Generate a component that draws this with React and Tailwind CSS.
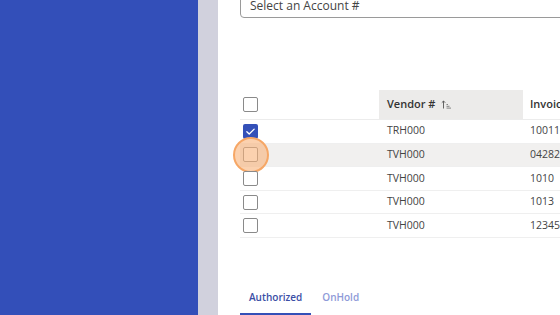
import React from 'react';

const rows = [
  { vendor: 'TRH000', invoice: '100110', checked: true },
  { vendor: 'TVH000', invoice: '042820', hover: true },
  { vendor: 'TVH000', invoice: '1010' },
  { vendor: 'TVH000', invoice: '1013' },
  { vendor: 'TVH000', invoice: '12345' },
];

function Box({ checked }) {
  if (checked) {
    return (
      <div className="w-[15px] h-[15px] rounded-[2px] bg-[#3450b8] flex items-center justify-center">
        <svg width="11" height="11" viewBox="0 0 12 12" fill="none">
          <path d="M2 6.2l2.6 2.6L10 3.4" stroke="#fff" strokeWidth="1.4" strokeLinecap="round" strokeLinejoin="round" />
        </svg>
      </div>
    );
  }
  return <div className="w-[15px] h-[15px] rounded-[2px] border border-[#8a8a8a] bg-white" />;
}

function SortIcon() {
  return (
    <svg width="11" height="9" viewBox="0 0 11 9" fill="none" className="ml-[6px]">
      <path d="M2.5 8.5V1M0.8 2.7L2.5 1l1.7 1.7" stroke="#555" strokeWidth="0.9" />
      <path d="M5.5 4.5h1.5M5.5 6.3h3M5.5 8.1h4.5" stroke="#777" strokeWidth="0.9" />
    </svg>
  );
}

export default function App() {
  return (
    <div className="w-[560px] h-[315px] overflow-hidden flex bg-white font-['Open_Sans',sans-serif]">
      <div className="w-[198px] shrink-0 bg-[#334fb9]" />
      <div className="w-[20px] shrink-0 bg-[#d1d1dd]" />
      <div className="flex-1 pl-[22px] flex flex-col min-w-0">
        {/* Account select */}
        <div className="-mt-[20px] h-[38px] w-[340px] shrink-0 border border-[#9a9a9a] rounded-[4px] flex items-end pb-[5px] pl-[9px]">
          <span className="text-[12px] text-[#444] leading-none whitespace-nowrap">Select an Account #</span>
        </div>

        {/* Table */}
        <div className="mt-[72px] w-[340px]">
          <div className="flex h-[30px] items-center border-b border-[#ececec]">
            <div className="w-[139px] pl-[3px]"><Box /></div>
            <div className="w-[144px] h-full bg-[#ecebea] flex items-center pl-[8px]">
              <span className="text-[11px] font-semibold text-[#333]">Vendor #</span>
              <SortIcon />
            </div>
            <div className="flex-1 pl-[7px] text-[11px] font-semibold text-[#333] whitespace-nowrap">Invoice #</div>
          </div>
          {rows.map((r, i) => (
            <div key={i}
              className={`flex h-[23.6px] items-center border-b border-[#efefef] ${r.hover ? 'bg-[#f1f0ef]' : ''}`}>
              <div className="w-[139px] pl-[3px] relative">
                <Box checked={r.checked} />
                {r.hover && (
                  <div className="absolute left-[-7px] top-[-10px] w-[36px] h-[36px] rounded-full bg-[#f9b27a]/60 border-2 border-[#f6a766]" />
                )}
              </div>
              <div className="w-[144px] pl-[8px] text-[10.5px] text-[#444]">{r.vendor}</div>
              <div className="flex-1 pl-[7px] text-[10.5px] text-[#444] whitespace-nowrap">{r.invoice}</div>
            </div>
          ))}
        </div>

        {/* Tabs */}
        <div className="mt-auto flex">
          <div className="px-[9px] pb-[8px] border-b-2 border-[#3450b8] text-[10px] font-semibold text-[#3a4ea6]">Authorized</div>
          <div className="px-[11px] pb-[8px] text-[10px] font-semibold text-[#8e9ad8]">OnHold</div>
        </div>
      </div>
    </div>
  );
}
